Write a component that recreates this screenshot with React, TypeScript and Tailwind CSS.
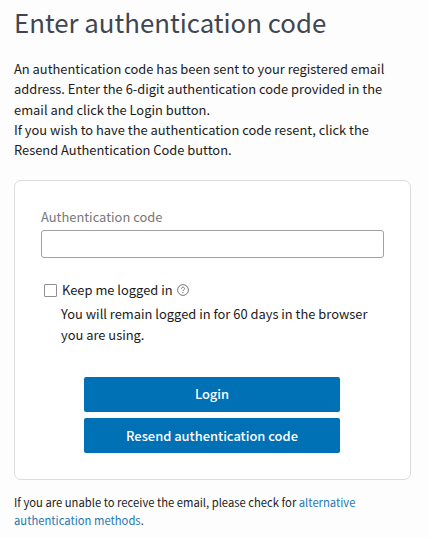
import React from 'react';

function HelpIcon() {
  return (
    <svg viewBox="0 0 12 12" className="ml-[4px] h-[12px] w-[12px] text-[#555]" fill="none" stroke="currentColor">
      <circle cx="6" cy="6" r="5.4" strokeWidth="0.8" />
      <path d="M4.4 4.8c0-1 .8-1.6 1.6-1.6s1.6.6 1.6 1.4c0 1.2-1.6 1.3-1.6 2.5" strokeWidth="0.8" />
      <path d="M6 8.1v1" strokeWidth="0.9" />
    </svg>
  );
}

export default function App() {
  return (
    <div className="h-[538px] overflow-hidden bg-[#fdfdfd] px-[14px] font-['Noto_Sans_CJK_JP','Noto_Sans',sans-serif] text-[#1b1b1b]">
      <h1 className="pt-[2px] text-[25.8px] leading-[40px] font-normal text-[#3f4650]">Enter authentication code</h1>
      <p className="mt-[17px] text-[12.9px] leading-[20.3px]">
        An authentication code has been sent to your registered email address. Enter the 6-digit authentication code provided in the email and click the Login button.
        <br />
        If you wish to have the authentication code resent, click the Resend Authentication Code button.
      </p>
      <div className="mt-[20px] h-[300px] w-[397px] rounded-[7px] border border-[#dcdcdc] bg-white px-[26px] pt-[26px]">
        <label className="block text-[12.9px] leading-[20px] text-[#777]">Authentication code</label>
        <input className="mt-[3px] block h-[28px] w-[343px] rounded-[3px] border border-[#a0a0a0] bg-white" />
        <div className="mt-[22px] flex items-center pl-[3px]">
          <span className="h-[13px] w-[13px] rounded-[1px] border border-[#8f8f8f] bg-white" />
          <span className="ml-[5px] text-[12.9px] leading-[20px]">Keep me logged in</span>
          <HelpIcon />
        </div>
        <p className="mt-[4px] pl-[20px] text-[12.9px] leading-[20.3px]">
          You will remain logged in for 60 days in the browser you are using.
        </p>
        <div className="mt-[32px] ml-[43px] flex w-[256px] flex-col gap-[6px]">
          <button className="h-[35px] rounded-[2px] bg-[#0071b5] pb-[1px] text-[12.9px] font-medium text-white">Login</button>
          <button className="h-[35px] rounded-[2px] bg-[#0071b5] text-[12.9px] font-medium text-white">Resend authentication code</button>
        </div>
      </div>
      <p className="mt-[13px] text-[11.25px] leading-[18px]">
        If you are unable to receive the email, please check for <a className="text-[#1f78b4]">alternative authentication methods</a>.
      </p>
    </div>
  );
}
